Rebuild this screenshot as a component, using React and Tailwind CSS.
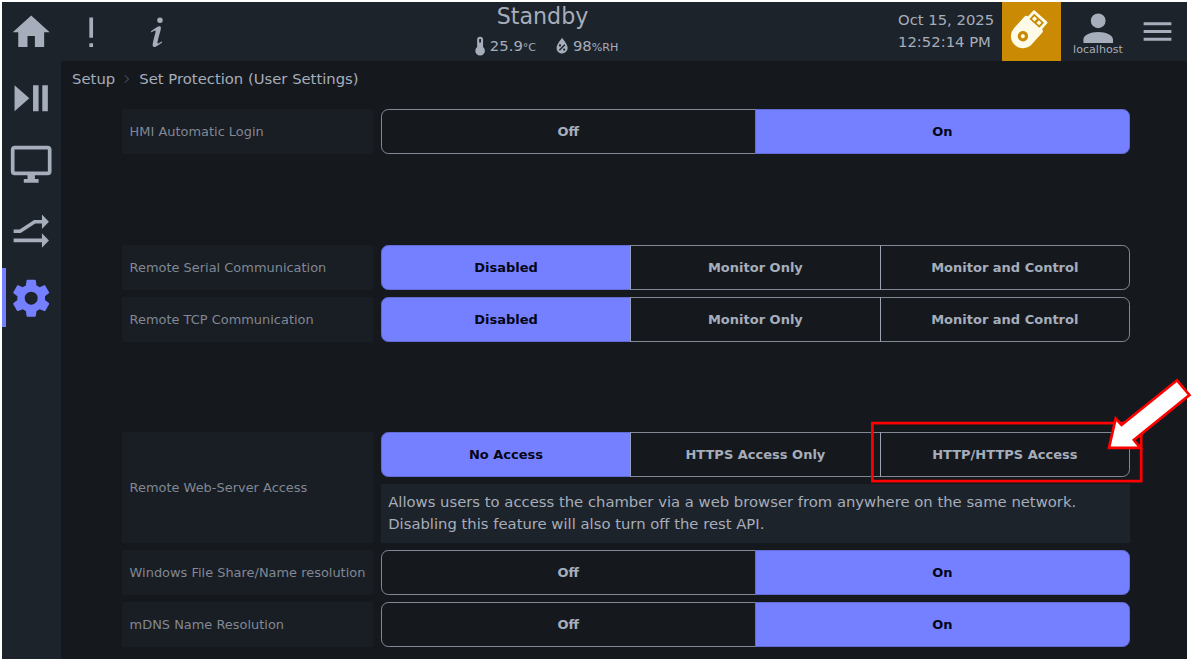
import React from 'react';

const icons = {
  home: 'M10 20v-6h4v6h5v-8h3L12 3 2 12h3v8z',
  alert: 'M11 4h2v11h-2zM11 18h2v2h-2z',
  info: 'M13.5,4A1.5,1.5 0 0,0 12,5.5A1.5,1.5 0 0,0 13.5,7A1.5,1.5 0 0,0 15,5.5A1.5,1.5 0 0,0 13.5,4M13.14,8.77C11.95,8.87 8.7,11.46 8.7,11.46C8.5,11.61 8.56,11.6 8.72,11.88C8.88,12.15 8.86,12.17 9.05,12.04C9.25,11.91 9.58,11.7 10.13,11.36C12.25,10 10.47,13.14 9.56,18.43C9.2,21.05 11.56,19.7 12.17,19.3C12.77,18.91 14.38,17.8 14.54,17.69C14.76,17.54 14.6,17.42 14.43,17.17C14.31,17 14.19,17.12 14.19,17.12C13.54,17.55 12.35,18.45 12.19,17.88C12,17.31 13.22,13.4 13.89,10.71C14,10.07 14.3,8.67 13.14,8.77Z',
  playPause: 'M3,5V19L11,12M13,19H16V5H13M18,5V19H21V5',
  monitor: 'M21,16H3V4H21M21,2H3C1.89,2 1,2.89 1,4V16A2,2 0 0,0 3,18H10V20H8V22H16V20H14V18H21A2,2 0 0,0 23,16V4C23,2.89 22.1,2 21,2Z',
  trend: 'M2.5 11.1H5.7L13.6 5.9H17.8V3L21.6 6.9L17.8 10.8V7.9H14.2L6.3 13H2.5ZM2.5 16H17.8V13.1L21.6 17L17.8 20.9V18H2.5Z',
  cog: 'M12,15.5A3.5,3.5 0 0,1 8.5,12A3.5,3.5 0 0,1 12,8.5A3.5,3.5 0 0,1 15.5,12A3.5,3.5 0 0,1 12,15.5M19.43,12.97C19.47,12.65 19.5,12.33 19.5,12C19.5,11.67 19.47,11.34 19.43,11L21.54,9.37C21.73,9.22 21.78,8.95 21.66,8.73L19.66,5.27C19.54,5.05 19.27,4.96 19.05,5.05L16.56,6.05C16.04,5.66 15.5,5.32 14.87,5.07L14.5,2.42C14.46,2.18 14.25,2 14,2H10C9.75,2 9.54,2.18 9.5,2.42L9.13,5.07C8.5,5.32 7.96,5.66 7.44,6.05L4.95,5.05C4.73,4.96 4.46,5.05 4.34,5.27L2.34,8.73C2.21,8.95 2.27,9.22 2.46,9.37L4.57,11C4.53,11.34 4.5,11.67 4.5,12C4.5,12.33 4.53,12.65 4.57,12.97L2.46,14.63C2.27,14.78 2.21,15.05 2.34,15.27L4.34,18.73C4.46,18.95 4.73,19.03 4.95,18.95L7.44,17.94C7.96,18.34 8.5,18.68 9.13,18.93L9.5,21.58C9.54,21.82 9.75,22 10,22H14C14.25,22 14.46,21.82 14.5,21.58L14.87,18.93C15.5,18.67 16.04,18.34 16.56,17.94L19.05,18.95C19.27,19.03 19.54,18.95 19.66,18.73L21.66,15.27C21.78,15.05 21.73,14.78 21.54,14.63L19.43,12.97Z',
  account: 'M12,4A4,4 0 0,1 16,8A4,4 0 0,1 12,12A4,4 0 0,1 8,8A4,4 0 0,1 12,4M12,14C16.42,14 20,15.79 20,18V20H4V18C4,15.79 7.58,14 12,14Z',
  menu: 'M3,6H21V8H3V6M3,11H21V13H3V11M3,16H21V18H3V16Z',
  thermometer: 'M15.2 13V5A3.2 3.2 0 0 0 8.8 5V13A5.2 5.2 0 1 0 15.2 13M12 4A1 1 0 0 1 13 5V8H11V5A1 1 0 0 1 12 4Z',
  humidity: 'M12,3.25C12,3.25 6,10 6,14C6,17.32 8.69,20 12,20A6,6 0 0,0 18,14C18,10 12,3.25 12,3.25M14.47,9.97L15.53,11.03L9.53,17.03L8.47,15.97M9.75,10A1.25,1.25 0 0,1 11,11.25A1.25,1.25 0 0,1 9.75,12.5A1.25,1.25 0 0,1 8.5,11.25A1.25,1.25 0 0,1 9.75,10M14.25,14.5A1.25,1.25 0 0,1 15.5,15.75A1.25,1.25 0 0,1 14.25,17A1.25,1.25 0 0,1 13,15.75A1.25,1.25 0 0,1 14.25,14.5Z',
};

const Icon = ({ name, className = 'size-[44.4px]' }) => (
  <svg viewBox="0 0 24 24" fill="currentColor" fillRule="evenodd" className={`shrink-0 ${className}`}>
    <path d={icons[name]} />
  </svg>
);

const UsbIcon = () => (
  <svg viewBox="0 0 59 59" className="size-[59px]">
    <g transform="translate(20.9 34.2) rotate(42)">
      <path
        fill="#fefce8"
        fillRule="evenodd"
        d="M-12 0V-15.5Q-12 -18 -9.5 -18V-25.5Q-9.5 -27 -8 -27H8Q9.5 -27 9.5 -25.5V-18Q12 -18 12 -15.5V0A12 12 0 0 1 -12 0ZM-6.6 -24.2V-17.2H6.6V-24.2Z"
      />
      <path fill="#fefce8" d="M-4.8 -22.5h3.6v3.6h-3.6zM1.2 -22.5h3.6v3.6h-3.6z" />
      <circle r="3.6" fill="none" stroke="#ca8a04" strokeWidth="3.2" />
    </g>
  </svg>
);

const Choice = ({ options, selected }) => (
  <div className="flex h-[44.4px] text-[13px] font-bold">
    {options.map((option, index) => (
      <button
        key={option}
        className={`flex-1 border first:rounded-l-[7.4px] last:rounded-r-[7.4px] ${
          index > 0 ? '-ml-px' : ''
        } ${
          option === selected
            ? 'border-[#626cd6] bg-[#7480ff] text-[#050617]'
            : 'border-[#a6adbb]/75 text-[#a6adbb]'
        }`}
      >
        {option}
      </button>
    ))}
  </div>
);

const Row = ({ label, options, selected, children }) => (
  <div className="flex gap-[7.6px]">
    <div className="flex w-[251px] shrink-0 items-center bg-[#191e24] pl-[7.4px] text-[12.95px] whitespace-nowrap text-[#a6adbb]/75">
      {label}
    </div>
    <div className="min-w-0 flex-1">
      <Choice options={options} selected={selected} />
      {children}
    </div>
  </div>
);

const remoteOptions = ['Disabled', 'Monitor Only', 'Monitor and Control'];

const Header = () => (
  <header className="flex h-[59px] shrink-0 bg-[#1d232a]">
    <div className="flex w-[450px] items-center pt-[0.8px] pl-[7.3px]">
      <Icon name="home" />
      <Icon name="alert" className="ml-[14.9px] size-[44.4px]" />
      <Icon name="info" className="ml-[22px] size-[44.4px]" />
    </div>
    <div className="flex w-[181px] flex-col items-center">
      <div className="h-[29px] text-[22.2px] leading-[29px]">Standby</div>
      <div className="flex h-[30px] items-center pl-[2px]">
        <Icon name="thermometer" className="size-[22.2px]" />
        <span className="-ml-px text-[14.8px]">
          25.9<span className="text-[11.1px]">°C</span>
        </span>
        <Icon name="humidity" className="ml-[14.6px] size-[22.2px]" />
        <span className="text-[14.8px]">
          98<span className="text-[11.1px]">%RH</span>
        </span>
      </div>
    </div>
    <div className="flex flex-1 justify-end">
      <div className="mr-[8px] w-[96px] pt-[7px] text-[14.8px] leading-[22.2px] whitespace-nowrap">
        <div>Oct 15, 2025</div>
        <div>12:52:14 PM</div>
      </div>
      <div className="size-[59px] bg-[#ca8a04]">
        <UsbIcon />
      </div>
      <div className="flex w-[74px] flex-col items-center pt-[4px]">
        <Icon name="account" />
        <span className="-mt-[7px] text-[11.1px] leading-[14px]">localhost</span>
      </div>
      <div className="flex w-[52px] items-center pl-[3.5px]">
        <Icon name="menu" className="size-[37px]" />
      </div>
    </div>
  </header>
);

const Sidebar = () => (
  <nav className="flex w-[59px] shrink-0 flex-col gap-[7.6px] bg-[#1d232a] pt-[7.6px]">
    {['playPause', 'monitor', 'trend', 'cog'].map((name) => (
      <div
        key={name}
        className={`flex h-[59px] items-center border-l-4 pl-[3.3px] ${
          name === 'cog' ? 'border-[#7480ff] text-[#7480ff]' : 'border-transparent'
        }`}
      >
        <Icon name={name} />
      </div>
    ))}
  </nav>
);

// Red frame and arrow drawn over the page
const Callout = () => (
  <svg
    viewBox="0 0 1193 659"
    className="pointer-events-none absolute inset-0 h-full w-full"
    stroke="#fe0000"
    strokeWidth="2.7"
  >
    <rect x="872.4" y="423.1" width="268.8" height="58" fill="none" />
    <path
      d="M1109 447.8L1115.7 418.5L1121.6 425L1177 380.3L1189.4 395L1133.9 440L1140.3 447.8Z"
      fill="#fff"
    />
  </svg>
);

const App = () => {
  return (
    <div className="relative h-[659px] w-[1193px] overflow-hidden bg-white pt-[2px] pl-[2px] font-['DejaVu_Sans',sans-serif] text-[#a6adbb]">
      <div className="flex h-[657px] w-[1185px] flex-col bg-[#15191e]">
        <Header />
        <div className="flex min-h-0 flex-1">
          <Sidebar />
          <main className="min-w-0 flex-1">
            <div className="flex h-[48.3px] items-center pb-[12.4px] pl-[11.1px] text-[14.8px]">
              <span>Setup</span>
              <svg viewBox="0 0 8 8" className="mr-[8px] ml-[8.2px] size-[8px]" fill="none" stroke="#a6adbb" strokeOpacity="0.5">
                <path d="M2 0.5L5.5 4L2 7.5" />
              </svg>
              <span>Set Protection (User Settings)</span>
            </div>
            <div className="flex flex-col gap-[7.4px] pr-[57px] pl-[61.2px]">
              <Row label="HMI Automatic Login" options={['Off', 'On']} selected="On" />
              <div className="h-[76.9px]" />
              <Row label="Remote Serial Communication" options={remoteOptions} selected="Disabled" />
              <Row label="Remote TCP Communication" options={remoteOptions} selected="Disabled" />
              <div className="h-[76px]" />
              <Row
                label="Remote Web-Server Access"
                options={['No Access', 'HTTPS Access Only', 'HTTP/HTTPS Access']}
                selected="No Access"
              >
                <p className="mt-[7.4px] bg-[#1d232a] px-[7.4px] pt-[6.6px] pb-[8.2px] text-[14.8px] leading-[22.1px]">
                  Allows users to access the chamber via a web browser from anywhere on the same network.
                  Disabling this feature will also turn off the rest API.
                </p>
              </Row>
              <Row label="Windows File Share/Name resolution" options={['Off', 'On']} selected="On" />
              <Row label="mDNS Name Resolution" options={['Off', 'On']} selected="On" />
            </div>
          </main>
        </div>
      </div>
      <Callout />
    </div>
  );
};

export default App;
